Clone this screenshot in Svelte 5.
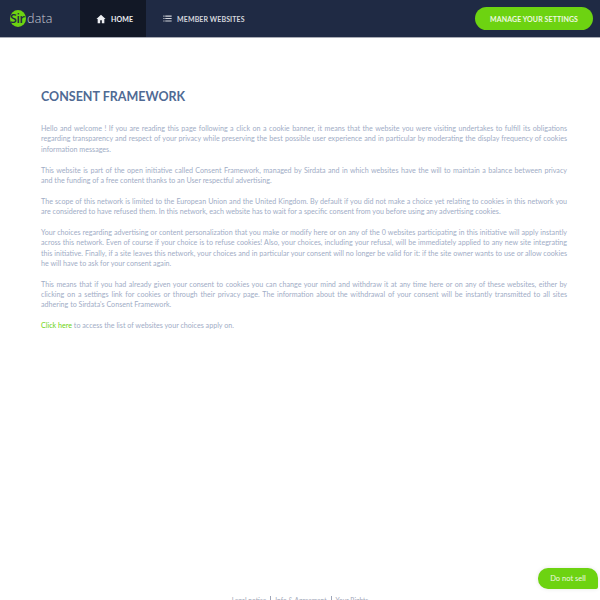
<script>
  const paragraphs = [
    "Hello and welcome ! If you are reading this page following a click on a cookie banner, it means that the website you were visiting undertakes to fulfill its obligations regarding transparency and respect of your privacy while preserving the best possible user experience and in particular by moderating the display frequency of cookies information messages.",
    "This website is part of the open initiative called Consent Framework, managed by Sirdata and in which websites have the will to maintain a balance between privacy and\u00a0the funding of a free content thanks to an User respectful advertising.",
    "The scope of this network is limited to the European Union and the United Kingdom. By default if you did not make a choice yet relating to cookies in this network you are considered to have refused them. In this network, each website has to wait for a specific consent from you before using any advertising cookies.",
    "Your choices regarding advertising or content personalization that you make or modify here or on any of the 0 websites participating in this initiative will apply instantly across this network. Even of course if your choice is to refuse cookies! Also, your choices, including your refusal, will be immediately applied to any new site integrating this initiative. Finally, if a site leaves this network, your choices and in particular your consent will no longer be valid for it: if the site owner wants to use or allow cookies he will have to ask for your consent again.",
    "This means that if you had already given your consent to cookies you can change your mind and withdraw it at any time here or on any of these websites, either by clicking on a settings link for cookies or through their privacy page. The information about the withdrawal of your consent will be instantly transmitted to all sites adhering to Sirdata's Consent Framework."
  ];
</script>

<div class="page">
  <header class="topbar">
    <a class="logo" href="#top"><span class="logo-mark">Sir</span><span class="logo-rest">data</span></a>
    <nav class="menu">
      <a class="menu-item active" href="#top">
        <svg viewBox="0 0 24 24" width="10" height="10"><path d="M12 2 1 12h3v10h6v-7h4v7h6V12h3z" fill="currentColor"/></svg>
        HOME
      </a>
      <a class="menu-item" href="#top">
        <svg viewBox="0 0 24 24" width="9" height="9"><path d="M1 4h3v3H1zM6 4h17v3H6zM1 10.500h3v3H1zM6 10.500h17v3H6zM1 17h3v3H1zM6 17h17v3H6z" fill="currentColor"/></svg>
        MEMBER WEBSITES
      </a>
    </nav>
    <button class="settings">MANAGE YOUR SETTINGS</button>
  </header>

  <main class="content">
    <h1>CONSENT FRAMEWORK</h1>
    {#each paragraphs as text}
      <p>{text}</p>
    {/each}
    <p><a class="link" href="#top">Click here</a> to access the list of websites your choices apply on.</p>
  </main>

  <footer class="foot">
    <span>Legal notice</span>
    <span>Info &amp; Agreement</span>
    <span>Your Rights</span>
  </footer>

  <button class="donotsell">Do not sell</button>
</div>

<style>
  :global(body) {
    margin: 0;
    background: #fff;
  }

  .page {
    position: relative;
    height: 600px;
    overflow: hidden;
    display: flex;
    flex-direction: column;
    font-family: "Lato", "Noto Sans", sans-serif;
  }

  .topbar {
    flex: none;
    height: 37px;
    display: flex;
    align-items: center;
    background: #1f2a44;
    border-bottom: 1px solid #a9acb6;
  }

  .logo {
    width: 80px;
    height: 37px;
    box-sizing: border-box;
    padding-left: 10px;
    display: flex;
    align-items: center;
    text-decoration: none;
    font-size: 12.5px;
    font-family: "Open Sans", sans-serif;
  }

  .logo-mark {
    width: 16px;
    height: 17px;
    border-radius: 50%;
    background: #6dd311;
    color: #1f2a44;
    font-weight: 600;
    line-height: 18px;
    letter-spacing: -0.4px;
    white-space: nowrap;
  }

  .logo-rest {
    margin-left: 1px;
    color: #c9ccd4;
    font-weight: 300;
    letter-spacing: 0.2px;
  }

  .menu {
    display: flex;
    height: 100%;
  }

  .menu-item {
    display: flex;
    align-items: center;
    gap: 5px;
    padding: 0 15px 0 17px;
    color: #d4d6dc;
    font-size: 7px;
    font-weight: 700;
    letter-spacing: 0.1px;
    text-decoration: none;
  }

  .menu-item.active {
    padding: 0 13px 0 16px;
    background: #121826;
    color: #eceef2;
  }

  .settings {
    margin-left: auto;
    margin-right: 7px;
    width: 118px;
    height: 23px;
    border: none;
    border-radius: 12px;
    padding: 0;
    background: #6dd311;
    color: #eef8e2;
    font-family: inherit;
    font-size: 7px;
    font-weight: 700;
    letter-spacing: 0.1px;
  }

  .content {
    flex: 1;
    padding: 51px 33px 0 41px;
  }

  h1 {
    margin: 0 0 20px;
    color: #4f6a94;
    font-size: 12.5px;
    font-weight: 700;
    line-height: 15px;
  }

  p {
    margin: 0 0 10.3px;
    color: #9fadc6;
    font-size: 7.15px;
    line-height: 10.4px;
    text-align: justify;
  }

  .link {
    color: #6dd311;
    text-decoration: none;
  }

  .foot {
    flex: none;
    height: 4px;
    display: flex;
    justify-content: center;
    gap: 4px;
    color: #9fa6b8;
    font-size: 6.6px;
    line-height: 8px;
  }

  .foot span + span {
    border-left: 1px solid #9fa6b8;
    padding-left: 4px;
  }

  .donotsell {
    position: absolute;
    right: 2px;
    bottom: 11px;
    width: 60px;
    height: 21px;
    border: none;
    padding: 0;
    border-radius: 10px 10px 2px 10px;
    background: #6dd311;
    color: #eef8e2;
    font-family: inherit;
    font-size: 7.500px;
    box-shadow: 0 0 4px rgba(0, 0, 0, 0.1);
  }
</style>
